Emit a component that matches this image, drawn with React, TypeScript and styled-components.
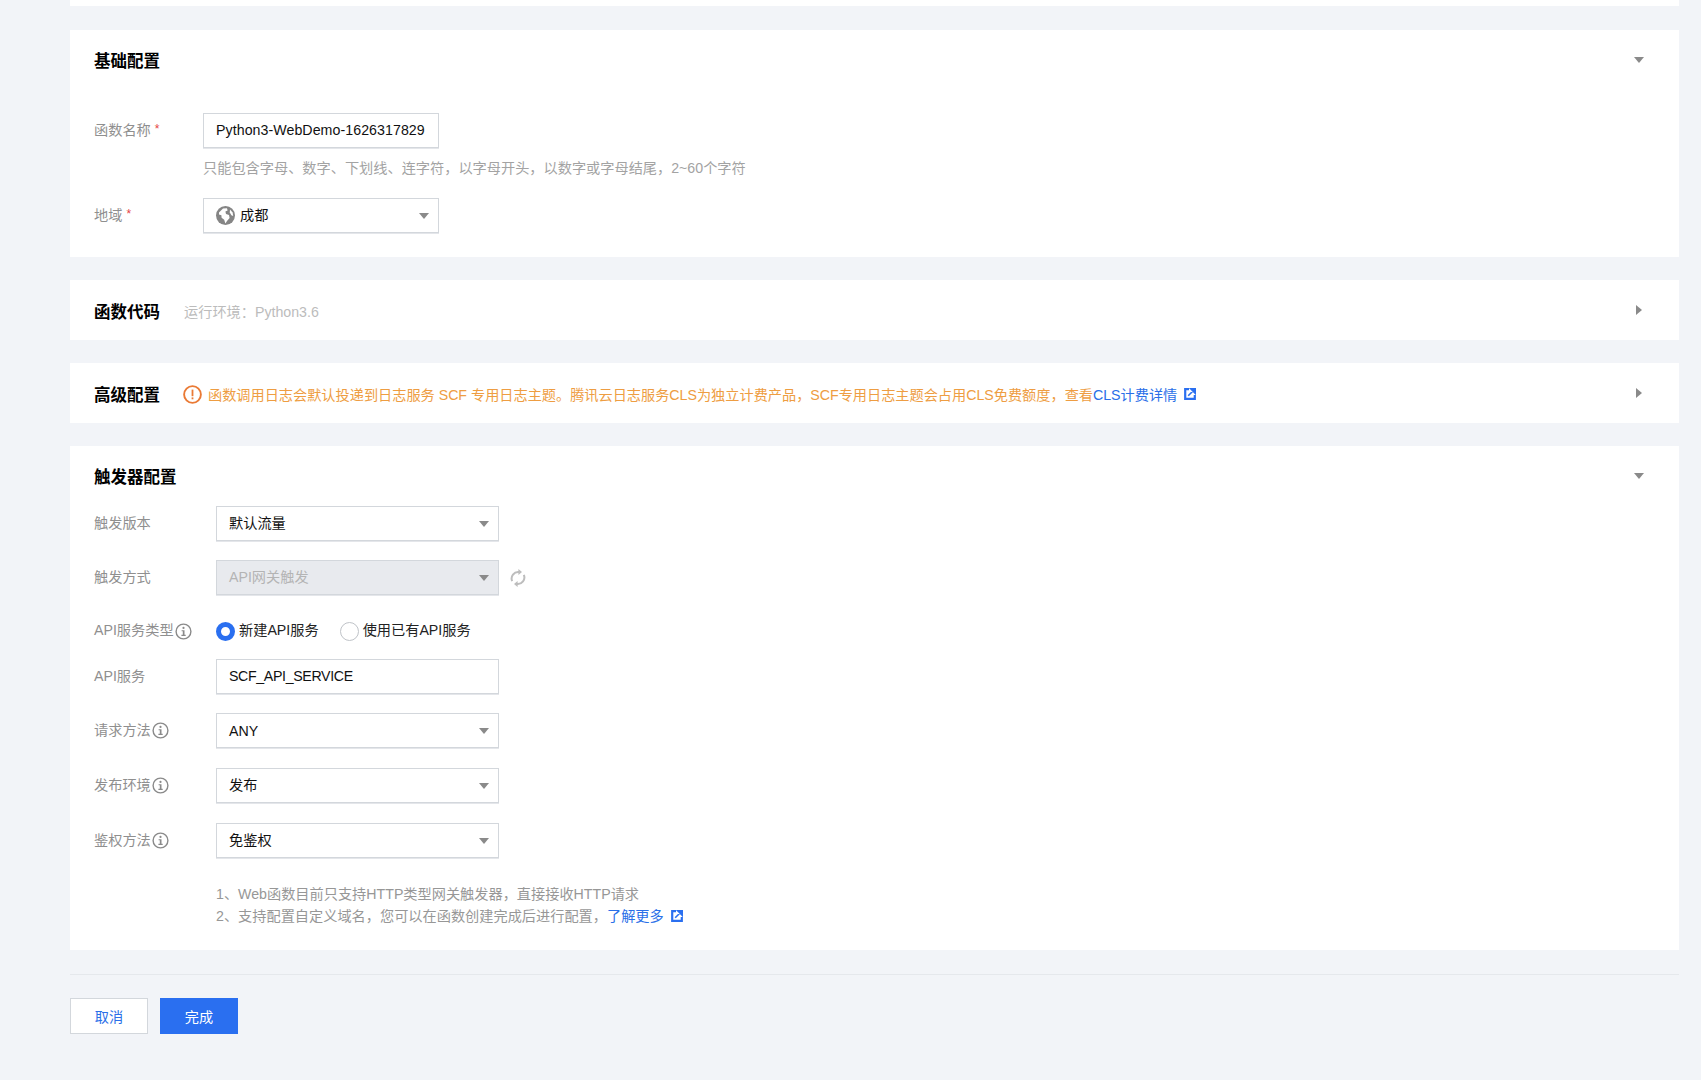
import React from 'react';
import styled, { createGlobalStyle } from 'styled-components';

const Global = createGlobalStyle`
  html, body { margin: 0; padding: 0; background: #f2f4f8; }
  body { font-family: "Liberation Sans", "Noto Sans CJK SC", sans-serif; font-size: 14.2px; color: #000; }
  * { box-sizing: border-box; }
`;

const Page = styled.div`
  width: 1701px;
  height: 1080px;
  overflow: hidden;
  padding: 0 22px 0 70px;
  background: #f2f4f8;
`;
const Sliver = styled.div`
  height: 6px;
  background: #fff;
  margin-bottom: 24px;
`;
const Card = styled.section<{ $pb?: number }>`
  background: #fff;
  padding: 0 32px ${(p) => p.$pb ?? 0}px 24px;
  margin-bottom: 23px;
`;
const CardHeader = styled.header<{ $h: number }>`
  height: ${(p) => p.$h}px;
  display: flex;
  align-items: center;
`;
const Title = styled.h3<{ $shift?: number }>`
  margin: 0;
  font-size: 16.5px;
  font-weight: 700;
  line-height: 22px;
  color: #000;
  white-space: nowrap;
  transform: translateY(${(p) => p.$shift ?? 0}px);
`;
const HeaderNote = styled.div`
  margin-left: 24px;
  font-size: 14.2px;
  color: #bcbcbc;
  display: flex;
  align-items: center;
  transform: translateY(1px);
  white-space: nowrap;
`;
const Warn = styled.div`
  margin-left: 23px;
  display: flex;
  align-items: center;
  color: #ee9d42;
  font-size: 14.18px;
  white-space: nowrap;
  transform: translateY(1px);
`;
const WarnIcon = styled.svg`
  width: 19px;
  height: 19px;
  margin-right: 6px;
  flex: none;
`;
const Link = styled.a`
  color: #2a6fe8;
  text-decoration: none;
  display: inline-flex;
  align-items: center;
`;
const ExtIcon = styled.svg`
  width: 12px;
  height: 12px;
  margin-left: 7px;
  flex: none;
`;
const Chevron = styled.span<{ $open?: boolean; $dy?: number }>`
  margin-left: auto;
  flex: none;
  width: 0;
  height: 0;
  transform: translateY(${(p) => p.$dy ?? 0}px);
  ${(p) =>
    p.$open
      ? `border-left: 5px solid transparent; border-right: 5px solid transparent; border-top: 6px solid #8a8a8a; margin-right: 3px;`
      : `border-top: 5px solid transparent; border-bottom: 5px solid transparent; border-left: 6px solid #8a8a8a; margin-right: 5px;`}
`;
const Body = styled.div<{ $pt?: number }>`
  padding-top: ${(p) => p.$pt ?? 0}px;
`;
const Row = styled.div<{ $top?: number; $labelW: number; $h?: number }>`
  display: grid;
  grid-template-columns: ${(p) => p.$labelW}px auto 1fr;
  align-items: center;
  height: ${(p) => p.$h ?? 35}px;
  margin-top: ${(p) => p.$top ?? 0}px;
`;
const Label = styled.label`
  display: flex;
  align-items: center;
  color: #8f8f8f;
  font-size: 14.2px;
  white-space: nowrap;
  transform: translateY(-2px);
`;
const Star = styled.span`
  color: #e54545;
  margin-left: 4px;
  font-size: 12px;
`;
const InfoIcon = styled.svg`
  width: 17px;
  height: 17px;
  margin-left: 1px;
  flex: none;
  transform: translateY(2px);
`;
const Control = styled.div<{ $w: number; $disabled?: boolean; $ls?: number }>`
  width: ${(p) => p.$w}px;
  height: 35px;
  border: 1px solid #d3d7dc;
  box-shadow: 0 1px 0 #e4e6ea;
  background: ${(p) => (p.$disabled ? '#e8eaee' : '#fff')};
  color: ${(p) => (p.$disabled ? '#b4b4b4' : '#111')};
  display: flex;
  align-items: center;
  padding: 0 9px 0 12px;
  font-size: 14.2px;
  letter-spacing: ${(p) => p.$ls ?? 0}px;
  white-space: nowrap;
`;
const ControlText = styled.span<{ $dy?: number }>`
  transform: translateY(${(p) => p.$dy ?? -2}px);
`;
const Caret = styled.span`
  margin-left: auto;
  width: 0;
  height: 0;
  border-left: 5px solid transparent;
  border-right: 5px solid transparent;
  border-top: 6px solid #8a8a8a;
`;
const Globe = styled.svg`
  width: 19px;
  height: 19px;
  margin-right: 5px;
  flex: none;
`;
const Refresh = styled.svg`
  width: 16px;
  height: 18px;
  margin-left: 11px;
`;
const Help = styled.div<{ $left: number }>`
  margin-left: ${(p) => p.$left}px;
  height: 20px;
  line-height: 20px;
  margin-top: 10px;
  margin-bottom: 20px;
  color: #a3a3a3;
  font-size: 14.2px;
  white-space: nowrap;
`;
const RadioGroup = styled.div`
  display: flex;
  align-items: center;
  gap: 21px;
`;
const RadioItem = styled.span`
  display: inline-flex;
  align-items: center;
  gap: 4px;
  color: #222;
  font-size: 14.2px;
  white-space: nowrap;
`;
const RadioDot = styled.span<{ $on?: boolean }>`
  width: 19px;
  height: 19px;
  border-radius: 50%;
  flex: none;
  background: #fff;
  border: ${(p) => (p.$on ? '5px solid #2a6ff0' : '1px solid #bfc3c8')};
`;
const RadioText = styled.span`
  transform: translateY(-2px);
`;
const Notes = styled.div`
  margin: 25px 0 0 122px;
  color: #979797;
  font-size: 14.2px;
  line-height: 22px;
  white-space: nowrap;
`;
const NoteLine = styled.div`
  display: flex;
  align-items: center;
`;
const Divider = styled.hr`
  border: 0;
  height: 1px;
  background: #e5e8ec;
  margin: 24px 0 23px;
`;
const Footer = styled.div`
  display: flex;
  gap: 12px;
`;
const Button = styled.button<{ $primary?: boolean }>`
  width: 78px;
  height: 36px;
  padding: 0;
  font-family: inherit;
  font-size: 14.2px;
  border: 1px solid ${(p) => (p.$primary ? '#2a6ff0' : '#d3d7dc')};
  background: ${(p) => (p.$primary ? '#2a6ff0' : '#fff')};
  color: ${(p) => (p.$primary ? '#fff' : '#2a6fe8')};
`;
const LastCard = styled(Card)`
  margin-bottom: 0;
`;

const Ext = () => (
  <ExtIcon viewBox="0 0 12 12">
    <path d="M5 1.2H1.2v9.6h9.6V7" fill="none" stroke="#2a6ff0" strokeWidth="2.2" />
    <path d="M4.2 7.8 10 2M6.6 .6h4.8v4.8z" fill="#2a6ff0" stroke="#2a6ff0" strokeWidth="1.6" />
  </ExtIcon>
);

const Info = () => (
  <InfoIcon viewBox="0 0 17 17">
    <circle cx="8.5" cy="8.5" r="7.4" fill="none" stroke="#8a8a8a" strokeWidth="1.4" />
    <circle cx="8.5" cy="4.9" r="1.1" fill="#8a8a8a" />
    <path d="M6.6 7.2h2.9v4.6h1.2v1.1H6.4v-1.1h1.4V8.3H6.6z" fill="#8a8a8a" />
  </InfoIcon>
);

const Sel = ({ w = 283, disabled, children }: { w?: number; disabled?: boolean; children: React.ReactNode }) => (
  <Control $w={w} $disabled={disabled}>
    {children}
    <Caret />
  </Control>
);

export default function App() {
  return (
    <Page>
      <Global />
      <Sliver />
      <Card $pb={24}>
        <CardHeader $h={62}>
          <Title>基础配置</Title>
          <Chevron $open $dy={-1} />
        </CardHeader>
        <Body $pt={21}>
          <Row $labelW={109}>
            <Label>函数名称<Star>*</Star></Label>
            <Control $w={236} $ls={0.06}><ControlText $dy={-1.5}>Python3-WebDemo-1626317829</ControlText></Control>
          </Row>
          <Help $left={109}>只能包含字母、数字、下划线、连字符，以字母开头，以数字或字母结尾，2~60个字符</Help>
          <Row $labelW={109}>
            <Label>地域<Star>*</Star></Label>
            <Sel w={236}>
              <Globe viewBox="0 0 19 19">
                <circle cx="9.5" cy="9.5" r="9.5" fill="#858585" />
                <path d="M3 6.5 7 2.6l4-.4.6 2.2-2.2 1.2.6 2.4 3 1 .6 3-2.6 3-1.6 2.4-1.2-3.6-2.6-2-.2-2.6L3 8.4z" fill="#fff" />
                <path d="M14 3.4l2.6 3.2.6 3.4-1.8-.8-1.6-2.8z" fill="#fff" />
              </Globe>
              <ControlText>成都</ControlText>
            </Sel>
          </Row>
        </Body>
      </Card>

      <Card>
        <CardHeader $h={60}>
          <Title $shift={2}>函数代码</Title>
          <HeaderNote>运行环境：Python3.6</HeaderNote>
          <Chevron />
        </CardHeader>
      </Card>

      <Card>
        <CardHeader $h={60}>
          <Title $shift={2}>高级配置</Title>
          <Warn>
            <WarnIcon viewBox="0 0 19 19">
              <circle cx="9.5" cy="9.5" r="8.4" fill="none" stroke="#ea7a35" strokeWidth="1.9" />
              <rect x="8.6" y="4.6" width="1.8" height="6.6" fill="#ea7a35" />
              <rect x="8.6" y="12.4" width="1.8" height="1.9" fill="#ea7a35" />
            </WarnIcon>
            函数调用日志会默认投递到日志服务 SCF 专用日志主题。腾讯云日志服务CLS为独立计费产品，SCF专用日志主题会占用CLS免费额度，查看
            <Link>CLS计费详情<Ext /></Link>
          </Warn>
          <Chevron />
        </CardHeader>
      </Card>

      <LastCard $pb={23}>
        <CardHeader $h={60}>
          <Title $shift={1}>触发器配置</Title>
          <Chevron $open />
        </CardHeader>
        <Body>
          <Row $labelW={122}>
            <Label>触发版本</Label>
            <Sel><ControlText>默认流量</ControlText></Sel>
          </Row>
          <Row $labelW={122} $top={19}>
            <Label>触发方式</Label>
            <Sel disabled><ControlText>API网关触发</ControlText></Sel>
            <Refresh viewBox="0 0 16 18">
              <path d="M2.2 12.2A6.6 6.6 0 0 1 9.2 3" fill="none" stroke="#bdbdbd" strokeWidth="2" />
              <path d="M8.4 0v6l3.6-3z" fill="#bdbdbd" />
              <path d="M13.8 5.8A6.6 6.6 0 0 1 6.8 15" fill="none" stroke="#bdbdbd" strokeWidth="2" />
              <path d="M7.6 18v-6L4 15z" fill="#bdbdbd" />
            </Refresh>
          </Row>
          <Row $labelW={122} $top={18} $h={36}>
            <Label>API服务类型<Info /></Label>
            <RadioGroup>
              <RadioItem><RadioDot $on /><RadioText>新建API服务</RadioText></RadioItem>
              <RadioItem><RadioDot /><RadioText>使用已有API服务</RadioText></RadioItem>
            </RadioGroup>
          </Row>
          <Row $labelW={122} $top={10}>
            <Label>API服务</Label>
            <Control $w={283} $ls={-0.35}><ControlText $dy={-1.5}>SCF_API_SERVICE</ControlText></Control>
          </Row>
          <Row $labelW={122} $top={19}>
            <Label>请求方法<Info /></Label>
            <Sel><ControlText $dy={-0.5}>ANY</ControlText></Sel>
          </Row>
          <Row $labelW={122} $top={20}>
            <Label>发布环境<Info /></Label>
            <Sel><ControlText>发布</ControlText></Sel>
          </Row>
          <Row $labelW={122} $top={20}>
            <Label>鉴权方法<Info /></Label>
            <Sel><ControlText>免鉴权</ControlText></Sel>
          </Row>
          <Notes>
            <NoteLine>1、Web函数目前只支持HTTP类型网关触发器，直接接收HTTP请求</NoteLine>
            <NoteLine>2、支持配置自定义域名，您可以在函数创建完成后进行配置，<Link>了解更多<Ext /></Link></NoteLine>
          </Notes>
        </Body>
      </LastCard>

      <Divider />
      <Footer>
        <Button>取消</Button>
        <Button $primary>完成</Button>
      </Footer>
    </Page>
  );
}
